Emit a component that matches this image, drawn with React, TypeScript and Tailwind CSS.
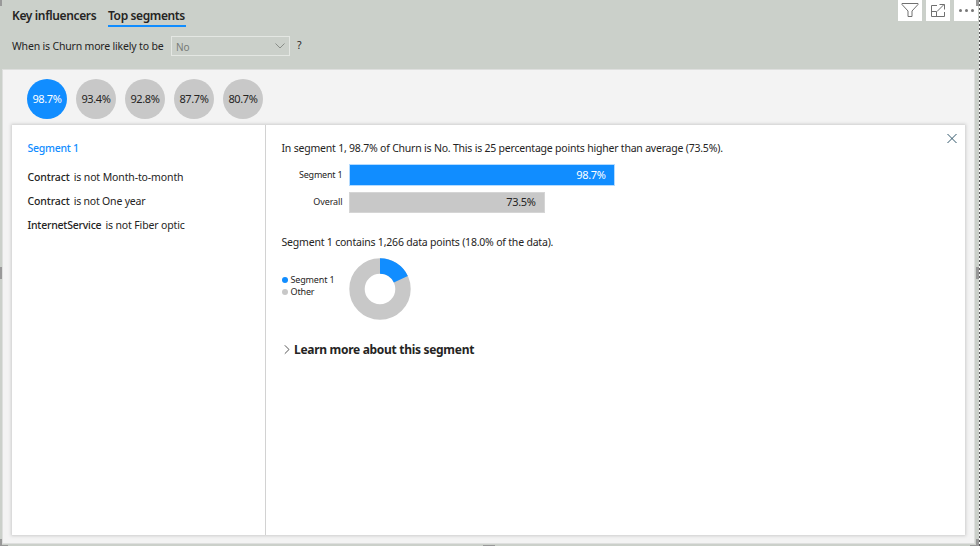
import React from 'react';

const segments = ['98.7%', '93.4%', '92.8%', '87.7%', '80.7%'];

function Rule({ field, text, fieldClass, textClass }: { field: string; text: string; fieldClass: string; textClass: string }) {
  return (
    <div className="flex h-6 items-center gap-1 whitespace-nowrap text-[10.5px] leading-4 text-[#252423]">
      <span className={`font-medium ${fieldClass}`}>{field}</span>
      <span className={textClass}>{text}</span>
    </div>
  );
}

function Header() {
  return (
    <header className="h-[69px] shrink-0 pl-3">
      <div className="flex h-[27px] gap-3 pt-2 text-[12px] font-semibold leading-4 text-[#252423]">
        <div className="w-[84px] whitespace-nowrap tracking-[-0.36px]">Key influencers</div>
        <div className="h-[19px] w-[78px] whitespace-nowrap border-b-2 border-[#118dff] tracking-[-0.38px]">Top segments</div>
      </div>
      <div className="flex items-center pt-[9px] text-[10.5px] text-[#252423]">
        <span className="w-[159px] whitespace-nowrap leading-5 tracking-[-0.18px]">When is Churn more likely to be</span>
        <div className="flex h-5 w-[119px] items-center justify-between border border-[#e4e7e3] pl-1 pr-1 text-[10px] text-[#777b77]">
          <span className="pt-0.5">No</span>
          <svg width="10" height="6" viewBox="0 0 10 6" fill="none" stroke="#777b77" strokeWidth=".8"><path d="M.5.5 5 5 9.5.5" /></svg>
        </div>
        <span className="ml-[7px]">?</span>
      </div>
    </header>
  );
}

function Toolbar() {
  return (
    <div className="absolute left-[898px] top-0 flex h-[21px] gap-1">
      <div className="flex w-6 justify-center bg-white pt-[3px]">
        <svg width="18" height="15" viewBox="0 0 18 15" fill="none" stroke="#707070"><path d="M1 .5h16v1L11 8v5.5H7V8L1 1.5z" /></svg>
      </div>
      <div className="flex w-6 justify-center bg-white pt-1">
        <svg width="16" height="14" viewBox="0 0 16 14" fill="none" stroke="#707070"><path d="M7 1.5H1.5v11h13V8M1.5 7.5h5v5M7 7.5l7-7M9.5.5h5v5" /></svg>
      </div>
      <div className="flex w-6 items-start justify-center gap-[3px] bg-white pt-[9px]">
        <i className="size-[3px] rounded-full bg-[#777]" />
        <i className="size-[3px] rounded-full bg-[#777]" />
        <i className="size-[3px] rounded-full bg-[#777]" />
      </div>
    </div>
  );
}

function Handles() {
  return (
    <>
      <i className="absolute left-0 top-0 h-1.5 w-0.5 bg-[#999]" />
      <i className="absolute left-0 top-[267px] h-3 w-0.5 bg-[#999]" />
      <i className="absolute bottom-0 left-0 h-[7px] w-0.5 bg-[#999]" />
      <i className="absolute bottom-0 left-0 h-px w-2 bg-[#999]" />
      <i className="absolute bottom-0 left-[483px] h-px w-3 bg-[#999]" />
      <i className="absolute bottom-0 left-[970px] h-px w-2 bg-[#999]" />
      <i className="absolute left-[976px] top-0 h-1.5 w-[3px] bg-[#999]" />
      <i className="absolute left-[976px] top-[267px] h-3 w-[3px] bg-[#999]" />
      <i className="absolute bottom-0 left-[976px] h-[7px] w-[3px] bg-[#999]" />
      <i className="absolute left-[979px] top-0 h-full w-px bg-[repeating-linear-gradient(to_bottom,#555_0,#555_2px,#fff_2px,#fff_4px)]" />
    </>
  );
}

function Details() {
  return (
    <section className="flex-1 pl-[15.5px] pt-[15px] text-[#252423]">
      <div className="flex h-6 items-start justify-between pr-2 text-[10.5px] leading-4">
        <p className="whitespace-nowrap tracking-[-0.21px]">In segment 1, 98.7% of Churn is No. This is 25 percentage points higher than average (73.5%).</p>
        <svg className="-mt-[17px] shrink-0" width="10" height="32" viewBox="0 0 10 32" fill="none" stroke="#31566b"><path d="m.5 11 9 9m0-9-9 9" /></svg>
      </div>
      <div className="flex h-[22px] items-center">
        <span className="w-[61px] whitespace-nowrap text-right text-[9px] tracking-[-0.2px]">Segment 1</span>
        <div className="ml-1.5 flex h-[22px] w-[266px] items-center justify-end border border-[#b4dbff] bg-[#118dff] pr-2 text-[11px] tracking-[-0.35px] text-white">98.7%</div>
      </div>
      <div className="mt-[5px] flex h-[22px] items-center">
        <span className="w-[61px] text-right text-[9px] tracking-[-0.1px]">Overall</span>
        <div className="ml-1.5 flex h-[21px] w-[196px] items-center justify-end border border-[#d5d5d5] bg-[#c8c8c8] pr-2 text-[11px] tracking-[-0.35px]">73.5%</div>
      </div>
      <p className="mt-[21px] whitespace-nowrap text-[10.5px] leading-4 tracking-[-0.2px]">Segment 1 contains 1,266 data points (18.0% of the data).</p>
      <div className="mt-[7.5px] flex h-[62px]">
        <div className="w-[67.5px] pt-[16.5px] text-[9px] leading-3 tracking-[-0.15px]">
          <div className="flex items-center gap-[3px] whitespace-nowrap"><i className="size-1.5 rounded-full bg-[#118dff]" />Segment 1</div>
          <div className="flex items-center gap-[3px]"><i className="size-1.5 rounded-full bg-[#c8c8c8]" />Other</div>
        </div>
        <svg width="62" height="62" viewBox="0 0 62 62">
          <circle cx="31" cy="31" r="23" fill="none" stroke="#c8c8c8" strokeWidth="15.4" />
          <circle cx="31" cy="31" r="23" fill="none" stroke="#118dff" strokeWidth="15.4" pathLength="100" strokeDasharray="18 82" transform="rotate(-90 31 31)" />
        </svg>
      </div>
      <div className="mt-[22.5px] flex items-center text-[12px] font-bold leading-4">
        <svg className="ml-[2.5px] mr-1" width="6" height="10" viewBox="0 0 6 10" fill="none" stroke="#444" strokeWidth=".9"><path d="m.8.3 4.2 4.2L.8 8.7" /></svg>
        <span className="whitespace-nowrap tracking-[-0.3px]">Learn more about this segment</span>
      </div>
    </section>
  );
}

export default function App() {
  return (
    <div className="relative flex h-[546px] w-[980px] flex-col overflow-hidden bg-[#cbd0ca] pl-0.5 font-['Noto_Sans','Open_Sans',sans-serif]">
      <div className="-ml-0.5"><Header /></div>
      <main className="h-[475px] w-[973px] border border-[#dedfde] bg-[#f3f3f3] pl-[9px] pt-[9px]">
        <div className="flex h-10 gap-[9px] pl-[15px]">
          {segments.map((value, i) => (
            <div key={value} className={`flex size-10 items-center justify-center rounded-full text-[11px] tracking-[-0.35px] ${i === 0 ? 'bg-[#118dff] text-white' : 'bg-[#c8c8c8] text-[#252423]'}`}>{value}</div>
          ))}
        </div>
        <div className="mt-1.5 flex h-[410px] w-[953px] bg-white shadow-[0_0_3px_1px_#cccccc]">
          <aside className="w-[254px] shrink-0 border-r border-[#d2d2d2] pl-[15.5px] pt-[15px]">
            <h2 className="mb-[9px] text-[10.5px] font-medium leading-4 tracking-[-0.25px] text-[#118dff]">Segment 1</h2>
            <Rule field="Contract" text="is not Month-to-month" fieldClass="tracking-[-0.12px]" textClass="tracking-[-0.12px]" />
            <Rule field="Contract" text="is not One year" fieldClass="tracking-[-0.12px]" textClass="tracking-[-0.2px]" />
            <Rule field="InternetService" text="is not Fiber optic" fieldClass="tracking-[-0.22px]" textClass="tracking-[-0.14px]" />
          </aside>
          <Details />
        </div>
      </main>
      <Toolbar />
      <Handles />
    </div>
  );
}
